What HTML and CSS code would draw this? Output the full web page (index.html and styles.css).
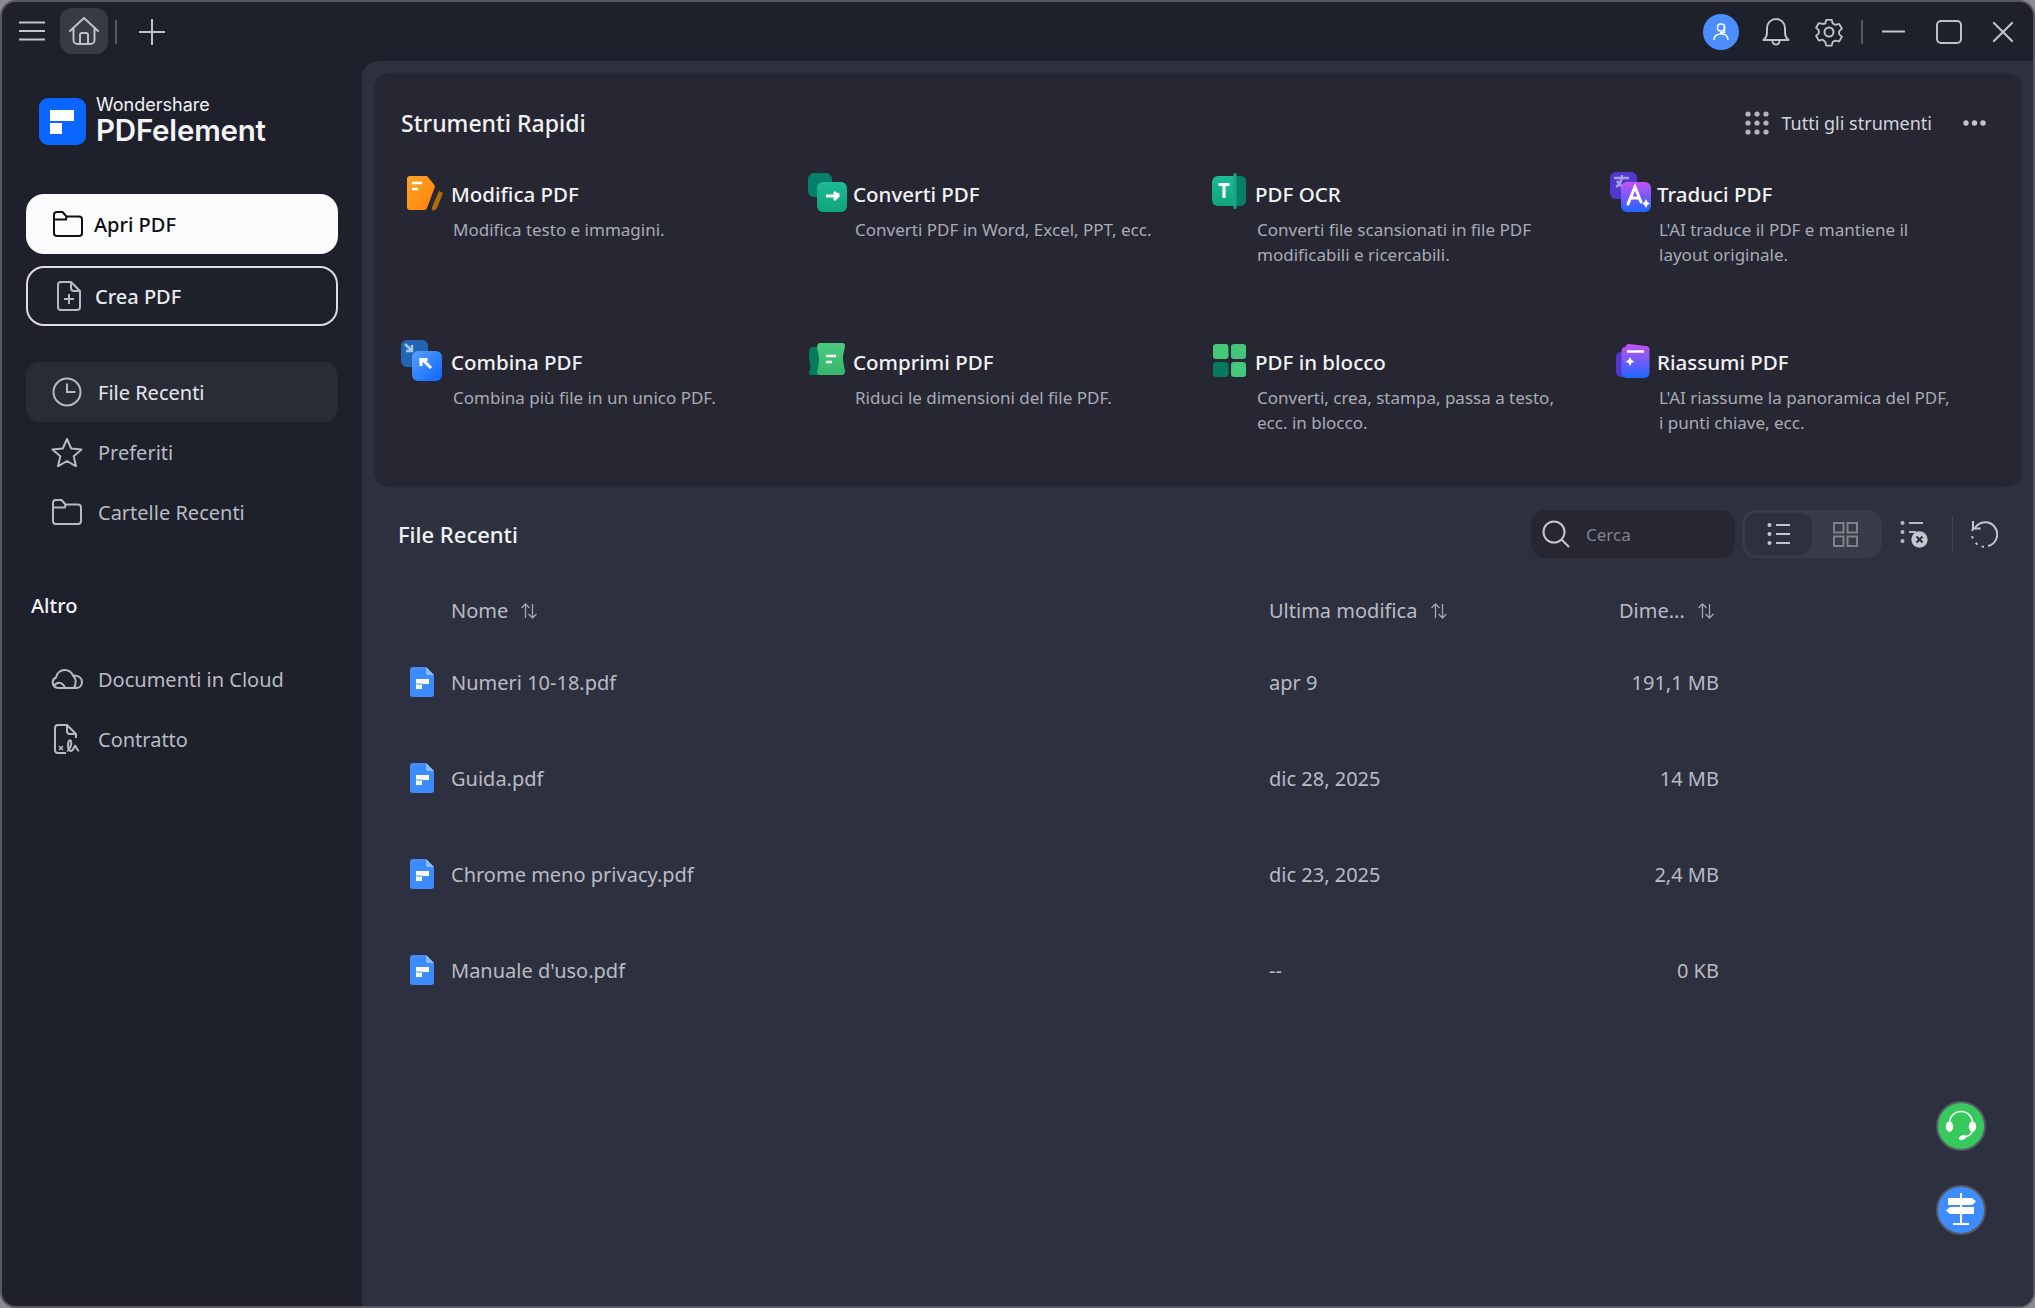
FILE: index.html
```html
<!DOCTYPE html>
<html lang="it">
<head>
<meta charset="utf-8">
<title>PDFelement</title>
<link rel="stylesheet" href="styles.css">
</head>
<body>
<svg class="defs" width="0" height="0" aria-hidden="true">
  <defs>
    <linearGradient id="gOrange" x1="0" y1="0" x2="1" y2="1"><stop offset="0" stop-color="#ffa528"/><stop offset="1" stop-color="#ff8208"/></linearGradient>
    <linearGradient id="gTeal" x1="0" y1="0" x2="0" y2="1"><stop offset="0" stop-color="#1dba95"/><stop offset="1" stop-color="#0fa57c"/></linearGradient>
    <linearGradient id="gBlue" x1="0" y1="0" x2="1" y2="1"><stop offset="0" stop-color="#5aa0ff"/><stop offset="1" stop-color="#0b66ff"/></linearGradient>
    <linearGradient id="gGreen" x1="0" y1="0" x2="0" y2="1"><stop offset="0" stop-color="#4ccb7f"/><stop offset="1" stop-color="#35b56d"/></linearGradient>
    <linearGradient id="gPurple" x1="0" y1="0" x2="0" y2="1"><stop offset="0" stop-color="#c552f5"/><stop offset="1" stop-color="#1f66ff"/></linearGradient>
    <symbol id="fileicon" viewBox="0 0 24 30"><path d="M3 0h13l8 8v19a3 3 0 0 1-3 3H3a3 3 0 0 1-3-3V3a3 3 0 0 1 3-3z" fill="#3d8bff"/><path d="M16 0l8 8h-6a2 2 0 0 1-2-2z" fill="#8fbcff"/><path d="M6 12h13v5h-7v5H6v-5h5v-0H6z" fill="#fff"/><path d="M6 17h6" stroke="#3d8bff" stroke-width="1"/></symbol>
    <symbol id="sort" viewBox="0 0 18 18"><path d="M5.500 16V2M1.500 6l4-4 4 4M12.500 2v14M8.500 12l4 4 4-4" fill="none" stroke="#a4a6b0" stroke-width="1.300"/></symbol>
  </defs>
</svg>
<div class="window">
  <header class="titlebar">
    <svg class="tb-menu" width="26" height="20" viewBox="0 0 26 20"><path d="M0 1.500h26M0 10h26M0 18.500h26" stroke="#c4c6ce" stroke-width="2"/></svg>
    <div class="tb-home">
      <svg width="30" height="28" viewBox="0 0 30 28" fill="none" stroke="#bfc1c9" stroke-width="2" stroke-linejoin="round" stroke-linecap="round"><path d="M1 14L15 1l14 13M4.500 11.500V23a4 4 0 0 0 4 4h13a4 4 0 0 0 4-4V11.500"/><path d="M11 27V18a2 2 0 0 1 2-2h4a2 2 0 0 1 2 2v9"/></svg>
    </div>
    <span class="tb-div"></span>
    <svg class="tb-plus" width="26" height="26" viewBox="0 0 26 26"><path d="M0 13h26M13 0v26" stroke="#bfc1c9" stroke-width="2"/></svg>
    <div class="tb-spacer"></div>
    <div class="tb-avatar">
      <svg width="16" height="18" viewBox="0 0 16 18" fill="none" stroke="#fff" stroke-width="1.500"><rect x="4.500" y="1" width="7" height="7" rx="3"/><path d="M11.500 3v6.500H7M1 17c0-4 3-6 7-6s7 2 7 6"/></svg>
    </div>
    <svg class="tb-bell" width="28" height="29" viewBox="0 0 28 29" fill="none" stroke="#bfc1c9" stroke-width="2" stroke-linejoin="round"><path d="M1.500 23c2.500-2 3.500-4 3.500-8V11a9 9 0 0 1 18 0v4c0 4 1 6 3.500 8z"/><path d="M10.500 24a3.500 3.500 0 0 0 7 0"/></svg>
    <svg class="tb-gear" width="28" height="30" viewBox="0 0 28 30" fill="none" stroke="#bfc1c9" stroke-width="2" stroke-linejoin="round"><path d="M11 2h6l1 4 3 1.500 4-1 3 5-3 3v3l3 3-3 5-4-1-3 1.500-1 4h-6l-1-4L7 23.500l-4 1-3-5 3-3v-3l-3-3 3-5 4 1L10 6z" transform="translate(1.100 1) scale(.92)"/><circle cx="14" cy="15" r="4.500"/></svg>
    <span class="tb-div tb-div-right"></span>
    <svg class="tb-min" width="23" height="3" viewBox="0 0 23 3"><path d="M0 1.500h23" stroke="#c4c6ce" stroke-width="2"/></svg>
    <svg class="tb-max" width="26" height="24" viewBox="0 0 26 24"><rect x="1" y="1" width="24" height="22" rx="4" fill="none" stroke="#bfc1c9" stroke-width="2"/></svg>
    <svg class="tb-close" width="20" height="20" viewBox="0 0 20 20"><path d="M0 0l20 20M20 0L0 20" stroke="#c4c6ce" stroke-width="2"/></svg>
  </header>
  <div class="body">
    <aside class="sidebar">
      <div class="logo">
        <svg width="47" height="47" viewBox="0 0 47 47"><rect width="47" height="47" rx="9" fill="#0a66ff"/><path d="M11 12h24v11H11zM11 25h12v11H11z" fill="#fff"/></svg>
        <div class="logo-text">
          <span class="logo-top">Wondershare</span>
          <span class="logo-main">PDFelement</span>
        </div>
      </div>
      <button class="btn btn-open">
        <svg width="30" height="26" viewBox="0 0 30 26" fill="none" stroke="#111" stroke-width="2" stroke-linejoin="round"><path d="M1 4a3 3 0 0 1 3-3h5.500l4 4.500H26a3 3 0 0 1 3 3V22a3 3 0 0 1-3 3H4a3 3 0 0 1-3-3z"/><path d="M1 8.500h12l.5-3"/></svg>
        <span>Apri PDF</span>
      </button>
      <button class="btn btn-new">
        <svg width="24" height="30" viewBox="0 0 24 30" fill="none" stroke="#b8bac3" stroke-width="2" stroke-linejoin="round"><path d="M4 1h10l9 9v16a3 3 0 0 1-3 3H4a3 3 0 0 1-3-3V4a3 3 0 0 1 3-3z"/><path d="M14 1v6a3 3 0 0 0 3 3h6M12 13v10M7 18h10"/></svg>
        <span>Crea PDF</span>
      </button>
      <nav class="nav">
        <a class="nav-item active">
          <span class="nav-icon"><svg width="30" height="30" viewBox="0 0 30 30" fill="none" stroke="#b8bac3" stroke-width="2"><circle cx="15" cy="15" r="13.500"/><path d="M15 6.500V15h8.500"/></svg></span>
          <span>File Recenti</span>
        </a>
        <a class="nav-item">
          <span class="nav-icon"><svg width="32" height="30" viewBox="0 0 32 30" fill="none" stroke="#b8bac3" stroke-width="2" stroke-linejoin="round"><path d="M16 2l4.200 9.500 10.300 1-7.800 6.800 2.300 10L16 24l-9 5.300 2.300-10L1.500 12.500l10.300-1z"/></svg></span>
          <span>Preferiti</span>
        </a>
        <a class="nav-item">
          <span class="nav-icon"><svg width="30" height="26" viewBox="0 0 30 26" fill="none" stroke="#b8bac3" stroke-width="2" stroke-linejoin="round"><path d="M1 4a3 3 0 0 1 3-3h5.500l4 4.500H26a3 3 0 0 1 3 3V22a3 3 0 0 1-3 3H4a3 3 0 0 1-3-3z"/><path d="M1 8.500h12l.5-3"/></svg></span>
          <span>Cartelle Recenti</span>
        </a>
      </nav>
      <h3 class="side-head">Altro</h3>
      <nav class="nav">
        <a class="nav-item">
          <span class="nav-icon"><svg width="32" height="20" viewBox="0 0 32 20" fill="none" stroke="#b8bac3" stroke-width="2" stroke-linejoin="round"><path d="M7 19a5.500 5.500 0 0 1-2-10.500C6 4 9.500 1 13.500 1c4 0 7 2 8.500 5.500C27 6 31 9 31 13c0 3.500-2.500 6-6 6z"/><path d="M3 17c3-5 9-4 11 2M22 6.500c3 3 3.500 8 1 12.500"/></svg></span>
          <span>Documenti in Cloud</span>
        </a>
        <a class="nav-item">
          <span class="nav-icon"><svg width="26" height="30" viewBox="0 0 26 30" fill="none" stroke="#b8bac3" stroke-width="2" stroke-linejoin="round"><path d="M12 29H4a3 3 0 0 1-3-3V4a3 3 0 0 1 3-3h9l9 9v4"/><path d="M13 1v6a3 3 0 0 0 3 3h6"/><path d="M5 22l4 4M9 22l-4 4" stroke-width="1.500"/><path d="M13 27c3-1 5-7 4-10-1-2-3 0-3 4s1 6 3 6 3-4 4-5 1 4 4 5"/></svg></span>
          <span>Contratto</span>
        </a>
      </nav>
    </aside>
    <main class="main">
      <section class="tools">
        <div class="tools-head">
          <h2 class="tools-title">Strumenti Rapidi</h2>
          <div class="tools-actions">
            <svg width="24" height="24" viewBox="0 0 24 24" fill="#b4b6bf"><circle cx="3" cy="3" r="2.600"/><circle cx="12" cy="3" r="2.600"/><circle cx="21" cy="3" r="2.600"/><circle cx="3" cy="12" r="2.600"/><circle cx="12" cy="12" r="2.600"/><circle cx="21" cy="12" r="2.600"/><circle cx="3" cy="21" r="2.600"/><circle cx="12" cy="21" r="2.600"/><circle cx="21" cy="21" r="2.600"/></svg>
            <span class="all-tools">Tutti gli strumenti</span>
            <svg class="more" width="23" height="6" viewBox="0 0 23 6" fill="#c4c6ce"><circle cx="3" cy="3" r="2.700"/><circle cx="11.500" cy="3" r="2.700"/><circle cx="20" cy="3" r="2.700"/></svg>
          </div>
        </div>
        <div class="tools-grid">
          <article class="tool">
            <div class="tool-row">
              <svg class="tool-icon" width="44" height="44" viewBox="0 0 44 44"><path d="M9 4h17l7 8.500c1 1.500 1 2.500.5 3.500L26 36c-.5 1.500-1.500 2-3 2H9a3 3 0 0 1-3-3V7a3 3 0 0 1 3-3z" fill="url(#gOrange)"/><path d="M11 11h10M11 17h6" stroke="#fff" stroke-width="2.500"/><path d="M38 19l4 2-6 15c-1 2-4 3-5 2-.5-1 0-2 .5-4z" fill="#b06a0c"/></svg>
              <h4>Modifica PDF</h4>
            </div>
            <p>Modifica testo e immagini.</p>
          </article>
          <article class="tool">
            <div class="tool-row">
              <svg class="tool-icon" width="44" height="44" viewBox="0 0 44 44"><rect x="5" y="1" width="24" height="24" rx="6" fill="#067f69"/><rect x="14" y="10" width="30" height="30" rx="6" fill="url(#gTeal)"/><path d="M23 24h9c2 0 3-1 3-3M31 20l4 4-4 4" fill="none" stroke="#fff" stroke-width="3"/></svg>
              <h4>Converti PDF</h4>
            </div>
            <p>Converti PDF in Word, Excel, PPT, ecc.</p>
          </article>
          <article class="tool">
            <div class="tool-row">
              <svg class="tool-icon" width="44" height="44" viewBox="0 0 44 44"><path d="M13 4h19v30H13a6 6 0 0 1-6-6V10a6 6 0 0 1 6-6z" fill="url(#gTeal)"/><path d="M31 4h5a5 5 0 0 1 5 5v20a5 5 0 0 1-5 5h-5z" fill="#067f69"/><rect x="28.500" y="1" width="3" height="36" rx="1.500" fill="#14a885"/><path d="M13.500 12.500h11M19 12.500V26" stroke="#fff" stroke-width="3.200"/></svg>
              <h4>PDF OCR</h4>
            </div>
            <p>Converti file scansionati in file PDF<br>modificabili e ricercabili.</p>
          </article>
          <article class="tool">
            <div class="tool-row">
              <svg class="tool-icon" width="44" height="44" viewBox="0 0 44 44"><rect x="3" y="0" width="27" height="27" rx="6" fill="#5238cf"/><path d="M7 6h15M15 3c0 6-3 10-6 12M10 9c2 3 5 6 8 6" fill="none" stroke="#a79ee8" stroke-width="2.500"/><rect x="14" y="10" width="30" height="30" rx="6" fill="url(#gPurple)"/><path d="M21 32l7-17 6 15M24 26h8" fill="none" stroke="#fff" stroke-width="3" stroke-linecap="round"/><path d="M39 27l1.500 3 2.500 1.500-2.500 1.500-1.500 3-1.500-3-2.500-1.500 2.500-1.500z" fill="#fff"/></svg>
              <h4>Traduci PDF</h4>
            </div>
            <p>L'AI traduce il PDF e mantiene il<br>layout originale.</p>
          </article>
          <article class="tool">
            <div class="tool-row">
              <svg class="tool-icon" width="44" height="44" viewBox="0 0 44 44"><rect width="27" height="27" rx="6" fill="#2364b4"/><path d="M4 4l7 7M5 11h6V5" fill="none" stroke="#a7c4e8" stroke-width="2.500"/><rect x="11" y="11" width="30" height="30" rx="6" fill="url(#gBlue)"/><path d="M22 20l8 8M20 26v-6.500h6.500" fill="none" stroke="#fff" stroke-width="3"/></svg>
              <h4>Combina PDF</h4>
            </div>
            <p>Combina più file in un unico PDF.</p>
          </article>
          <article class="tool">
            <div class="tool-row">
              <svg class="tool-icon" width="44" height="44" viewBox="0 0 44 44"><path d="M9 7h16v28H9c-2 0-3-1-3-2 1-4 2-6 1-10-.5-3-1-5-1-9 0-4 1-7 3-7z" fill="#067a5c"/><path d="M17 3h22c2 0 3 1 3 3-.5 5-2 7-2 12s1.500 9 2 13c0 2-1 4-3 4H17c-2 0-3-1-3-3 1-5 2-8 2-13 0-4-1-7-2-11 0-3 1-5 3-5z" fill="url(#gGreen)"/><path d="M23 16h10M23 22h6" stroke="#fff" stroke-width="2.500"/></svg>
              <h4>Comprimi PDF</h4>
            </div>
            <p>Riduci le dimensioni del file PDF.</p>
          </article>
          <article class="tool">
            <div class="tool-row">
              <svg class="tool-icon" width="44" height="44" viewBox="0 0 44 44"><rect x="8" y="4" width="15.500" height="15" rx="3" fill="#46c67b"/><rect x="26" y="4" width="15" height="15" rx="3" fill="#46c67b"/><rect x="8" y="22" width="15.500" height="15" rx="3" fill="#067a5c"/><rect x="26" y="22" width="15" height="15" rx="3" fill="#46c67b"/></svg>
              <h4>PDF in blocco</h4>
            </div>
            <p>Converti, crea, stampa, passa a testo,<br>ecc. in blocco.</p>
          </article>
          <article class="tool">
            <div class="tool-row">
              <svg class="tool-icon" width="44" height="44" viewBox="0 0 44 44"><rect x="9" y="12" width="24" height="25" rx="5" fill="#5238cf"/><path d="M20 6a3 3 0 0 1 3.500-3L40 5a4 4 0 0 1 4 4v23a5 5 0 0 1-5 5H21a5 5 0 0 1-5-5V10a4 4 0 0 1 4-4z" fill="url(#gPurple)" transform="translate(-1.500 1)"/><path d="M20 11.500h17" stroke="#fff" stroke-width="2.500"/><path d="M23 17l1.500 3 3 1.500-3 1.500-1.500 3-1.500-3-3-1.500 3-1.500z" fill="#fff"/></svg>
              <h4>Riassumi PDF</h4>
            </div>
            <p>L'AI riassume la panoramica del PDF,<br>i punti chiave, ecc.</p>
          </article>
        </div>
      </section>
      <section class="recent">
        <div class="recent-head">
          <h2 class="recent-title">File Recenti</h2>
          <div class="search">
            <svg width="28" height="28" viewBox="0 0 28 28" fill="none" stroke="#c4c6ce" stroke-width="2"><circle cx="12" cy="12" r="10.500"/><path d="M19.500 19.500L27 27"/></svg>
            <span>Cerca</span>
          </div>
          <div class="toggle">
            <span class="toggle-btn on">
              <svg width="24" height="24" viewBox="0 0 24 24"><circle cx="2.500" cy="3" r="2" fill="#c4c6ce"/><circle cx="2.500" cy="12" r="2" fill="#c4c6ce"/><circle cx="2.500" cy="21" r="2" fill="#c4c6ce"/><path d="M9 3h14M9 12h14M9 21h14" stroke="#c4c6ce" stroke-width="2"/></svg>
            </span>
            <span class="toggle-btn">
              <svg width="25" height="25" viewBox="0 0 25 25" fill="none" stroke="#7f818b" stroke-width="2"><rect x="1" y="1" width="9.500" height="9.500"/><rect x="14.500" y="1" width="9.500" height="9.500"/><rect x="1" y="14.500" width="9.500" height="9.500"/><rect x="14.500" y="14.500" width="9.500" height="9.500"/></svg>
            </span>
          </div>
          <svg class="clear" width="28" height="28" viewBox="0 0 28 28"><circle cx="2.500" cy="3" r="2" fill="#b8bac3"/><circle cx="2.500" cy="12" r="2" fill="#b8bac3"/><circle cx="2.500" cy="21" r="2" fill="#b8bac3"/><path d="M9 3h14M9 12h7" stroke="#b8bac3" stroke-width="2"/><circle cx="19.500" cy="19.500" r="8.200" fill="#c4c6ce"/><path d="M16.500 16.500l6 6M22.500 16.500l-6 6" stroke="#2d303e" stroke-width="2"/></svg>
          <span class="head-div"></span>
          <svg class="refresh" width="28" height="28" viewBox="0 0 28 28" fill="none" stroke="#c4c6ce" stroke-width="2"><path d="M5 8A12 12 0 1 1 18 26" /><path d="M14 26.800a12 12 0 0 1-3-.6M7.500 24.500a12 12 0 0 1-2.500-2.500M2.800 18.500a12 12 0 0 1-.8-3.500M2.200 11a12 12 0 0 1 1-2.500" stroke-dasharray="2.500 2.500"/><path d="M3 1v7.500h7.500"/></svg>
        </div>
        <div class="table">
          <div class="t-row t-head">
            <span class="t-ico"></span>
            <span class="t-name">Nome <svg class="sort" width="18" height="18"><use href="#sort"/></svg></span>
            <span class="t-date">Ultima modifica <svg class="sort" width="18" height="18"><use href="#sort"/></svg></span>
            <span class="t-size">Dime... <svg class="sort" width="18" height="18"><use href="#sort"/></svg></span>
          </div>
          <div class="t-row">
            <svg class="t-ico" width="24" height="30"><use href="#fileicon"/></svg>
            <span class="t-name">Numeri 10-18.pdf</span>
            <span class="t-date">apr 9</span>
            <span class="t-size">191,1 MB</span>
          </div>
          <div class="t-row">
            <svg class="t-ico" width="24" height="30"><use href="#fileicon"/></svg>
            <span class="t-name">Guida.pdf</span>
            <span class="t-date">dic 28, 2025</span>
            <span class="t-size">14 MB</span>
          </div>
          <div class="t-row">
            <svg class="t-ico" width="24" height="30"><use href="#fileicon"/></svg>
            <span class="t-name">Chrome meno privacy.pdf</span>
            <span class="t-date">dic 23, 2025</span>
            <span class="t-size">2,4 MB</span>
          </div>
          <div class="t-row">
            <svg class="t-ico" width="24" height="30"><use href="#fileicon"/></svg>
            <span class="t-name">Manuale d'uso.pdf</span>
            <span class="t-date">--</span>
            <span class="t-size">0 KB</span>
          </div>
        </div>
      </section>
      <div class="fab fab-green">
        <svg width="32" height="32" viewBox="0 0 32 32" fill="none"><path d="M4.500 15V13a11.500 11.500 0 0 1 23 0v2" stroke="#fff" stroke-width="1.500"/><ellipse cx="4.500" cy="16.500" rx="3.700" ry="5.200" fill="#fff"/><ellipse cx="27.500" cy="16.500" rx="3.700" ry="5.200" fill="#fff"/><path d="M27 21c0 3-3 5-7 6" stroke="#fff" stroke-width="1.500"/><ellipse cx="17.500" cy="27.500" rx="3.700" ry="2.300" fill="#fff" transform="rotate(-25 17.500 27.500)"/></svg>
      </div>
      <div class="fab fab-blue">
        <svg width="32" height="34" viewBox="0 0 32 34"><path d="M16 0v30M8 31h16" stroke="#fff" stroke-width="2"/><path d="M3 5h24l4 3.500-4 3.500H3zM5 14h24v7H5l-4-3.500z" fill="#fff"/></svg>
      </div>
    </main>
  </div>
</div>
</body>
</html>
```
FILE: styles.css
```css
* { box-sizing: border-box; }
html, body { height: 100%; margin: 0; }
body {
  background: #8a8b91;
  font-family: "Noto Sans", "Open Sans", sans-serif;
  color: #c6c8d0;
  overflow: hidden;
}
.defs { position: absolute; }
.window {
  height: 100%;
  display: flex;
  flex-direction: column;
  background: #1e202b;
  border: 2px solid #56575f;
  border-radius: 16px;
  overflow: hidden;
}

/* title bar */
.titlebar {
  flex: 0 0 59px;
  display: flex;
  align-items: center;
  padding: 0 20px 0 17px;
}
.tb-menu { margin-right: 15px; margin-top: -1px; }
.tb-home {
  width: 48px;
  height: 46px;
  margin-top: -1px;
  border-radius: 12px;
  background: #383a45;
  display: flex;
  align-items: center;
  justify-content: center;
}
.tb-div { width: 2px; height: 24px; background: #55575f; margin: 0 22px 0 7px; }
.tb-spacer { flex: 1; }
.tb-avatar {
  width: 36px;
  height: 36px;
  border-radius: 50%;
  background: #4b8fff;
  display: flex;
  align-items: center;
  justify-content: center;
}
.tb-bell { margin-left: 23px; }
.tb-gear { margin-left: 25px; }
.tb-div-right { margin: 0 19px 0 18px; }
.tb-max { margin-left: 31px; }
.tb-close { margin-left: 31px; }

/* layout */
.body { flex: 1; display: flex; min-height: 0; }
.sidebar {
  flex: 0 0 360px;
  padding: 36px 22px 0 24px;
}
.main {
  flex: 1;
  position: relative;
  background: #2d303e;
  border-radius: 16px 0 0 0;
  padding: 12px 11px 0 12px;
}

/* sidebar */
.logo { display: flex; align-items: center; gap: 10px; margin: 0 0 49px 13px; }
.logo-text { display: flex; flex-direction: column; font-family: Inter, sans-serif; color: #f4f4f6; }
.logo-top { font-size: 18px; line-height: 20px; margin-top: -2px; }
.logo-main { font-size: 29.500px; font-weight: 600; line-height: 30px; letter-spacing: -.2px; }
.btn {
  width: 312px;
  height: 60px;
  display: flex;
  align-items: center;
  gap: 11px;
  padding: 0 0 0 27px;
  border-radius: 18px;
  font: 500 20px "Noto Sans", sans-serif;
  cursor: pointer;
}
.btn-open { background: #fafbfd; border: 0; color: #0e0e12; margin-bottom: 12px; }
.btn-new { background: transparent; border: 2px solid #dcdde2; color: #e8e9ee; padding-left: 29px; gap: 14px; margin-bottom: 36px; }
.nav { display: flex; flex-direction: column; }
.nav-item {
  width: 312px;
  height: 60px;
  display: flex;
  align-items: center;
  gap: 14px;
  padding-left: 24px;
  border-radius: 14px;
  font-size: 20px;
  color: #b9bbc4;
}
.nav-item.active { background: #292c37; color: #e6e7ec; }
.nav-icon { width: 34px; display: flex; justify-content: center; }
.side-head {
  margin: 50px 0 30px 5px;
  font-size: 20px;
  font-weight: 500;
  line-height: 27px;
  color: #f2f2f5;
}

/* tools */
.tools {
  height: 414px;
  background: #262733;
  border-radius: 16px;
  padding: 0 0 0 27px;
}
.tools-head {
  height: 99px;
  display: flex;
  align-items: center;
  padding-right: 36px;
}
.tools-title { margin: 0; flex: 1; font-size: 23px; font-weight: 500; color: #f2f2f5; }
.tools-actions { display: flex; align-items: center; gap: 12px; }
.all-tools { font-size: 18px; color: #d3d5dc; }
.more { margin-left: 19px; }
.tools-grid { display: grid; grid-template-columns: repeat(4, 402px); grid-auto-rows: 168px; }
.tool-row { display: flex; align-items: center; gap: 6px; }
.tool-row h4 { margin: 0; font-size: 20.500px; font-weight: 500; color: #f2f2f5; line-height: 44px; }
.tool-icon { flex: none; }
.tool p { margin: 1px 0 0 52px; font-size: 17px; line-height: 25px; color: #a9abb5; }

/* recent */
.recent-head {
  height: 70px;
  margin-top: 12px;
  display: flex;
  align-items: center;
  padding-right: 24px;
}
.recent-title { margin: 0 0 0 24px; flex: 1; font-size: 22px; font-weight: 500; color: #f2f2f5; }
.search {
  width: 204px;
  height: 48px;
  display: flex;
  align-items: center;
  gap: 16px;
  padding-left: 11px;
  border-radius: 14px;
  background: #262733;
  font-size: 17px;
  color: #7f828f;
}
.toggle {
  display: flex;
  width: 140px;
  height: 48px;
  margin-left: 7px;
  padding: 3px;
  border-radius: 14px;
  background: #383b47;
}
.toggle-btn { flex: 1; display: flex; align-items: center; justify-content: center; border-radius: 12px; }
.toggle-btn.on { background: #2d303e; }
.clear { margin-left: 18px; }
.head-div { width: 1px; height: 36px; background: #44465250; background: #444652; margin: 0 17px 0 24px; }
.table { margin-top: 17px; }
.t-row {
  height: 96px;
  display: grid;
  grid-template-columns: 24px 835px 350px 100px;
  align-items: center;
  padding-left: 36px;
  font-size: 20px;
  color: #b9bbc4;
}
.t-row svg.t-ico { display: block; }
.t-name { margin-left: 17px; }
.t-date { display: block; }
.t-size { text-align: right; white-space: nowrap; }
.t-head { height: 48px; }
.t-head .t-size { text-align: left; white-space: nowrap; }
.sort { margin-left: 7px; vertical-align: -2px; }

/* floating buttons */
.fab {
  position: absolute;
  width: 50px;
  height: 50px;
  right: 47px;
  border-radius: 50%;
  border: 2px solid #575a66;
  display: flex;
  align-items: center;
  justify-content: center;
}
.fab-green { bottom: 155px; background: #37c95c; }
.fab-blue { bottom: 71px; background: #3f8cff; }
```
